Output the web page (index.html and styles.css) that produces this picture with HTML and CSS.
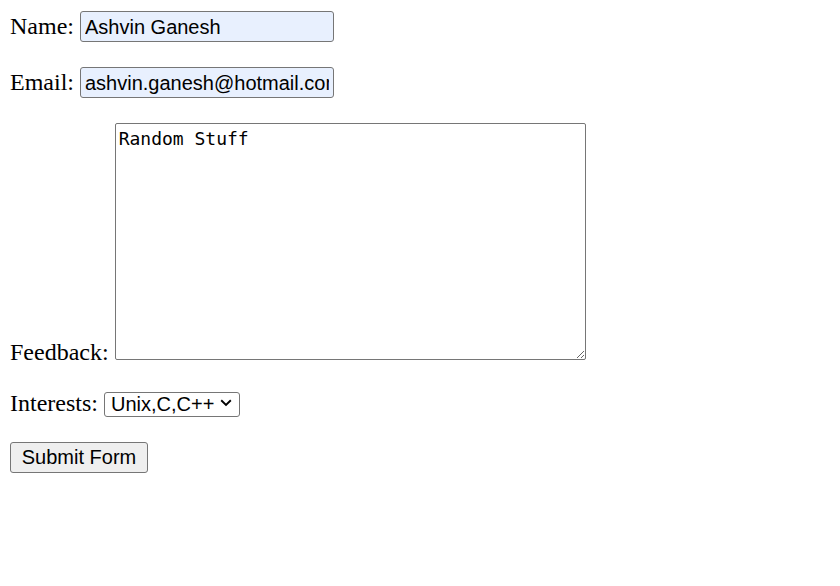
FILE: index.html
```html
<!DOCTYPE html>
<html>
<head>
<meta charset="utf-8">
<link rel="stylesheet" href="styles.css">
</head>
<body>
<form class="form">
  <div class="row">
    <label class="label" for="name">Name:</label>
    <input class="field filled" id="name" type="text" value="Ashvin Ganesh">
  </div>
  <div class="row">
    <label class="label" for="email">Email:</label>
    <input class="field filled" id="email" type="text" value="ashvin.ganesh@hotmail.com">
  </div>
  <div class="row row-bottom">
    <label class="label label-bottom" for="fb">Feedback:</label>
    <textarea class="area" id="fb">Random Stuff</textarea>
  </div>
  <div class="row row-select">
    <label class="label" for="int">Interests:</label>
    <span class="select-wrap">
      <select class="select" id="int"><option>Unix,C,C++</option></select>
      <svg class="chev" width="12" height="8" viewBox="0 0 12 8"><path d="M1.2 1.3 L6 6 L10.8 1.3" fill="none" stroke="#000" stroke-width="1.9"/></svg>
    </span>
  </div>
  <div class="row">
    <button class="btn" type="button">Submit Form</button>
  </div>
</form>
</body>
</html>
```
FILE: styles.css
```css
html, body {
  margin: 0;
  padding: 0;
  background: #fff;
}
.form {
  display: flex;
  flex-direction: column;
  align-items: flex-start;
  gap: 25px;
  padding: 11px 10px;
  font-family: "Liberation Serif", "Times New Roman", serif;
  font-size: 24px;
  color: #000;
}
.row {
  display: flex;
  align-items: baseline;
  gap: 6px;
}
.row-bottom {
  align-items: flex-end;
}
.label-bottom {
  margin-bottom: -6px;
}
.row-select {
  margin-top: 5px;
}
.label {
  white-space: nowrap;
}
.field {
  box-sizing: border-box;
  width: 254px;
  height: 31px;
  margin: 0;
  padding: 1px 4px 0;
  border: 1px solid #767676;
  border-radius: 3px;
  font-family: "Liberation Sans", Arial, sans-serif;
  font-size: 20px;
  color: #000;
  outline: none;
}
.filled {
  background: #e8f0fe;
}
.area {
  box-sizing: border-box;
  width: 471px;
  height: 237px;
  margin: 0;
  padding: 4px 3px;
  border: 1px solid #767676;
  border-radius: 2px;
  font-family: "DejaVu Sans Mono", "Liberation Mono", monospace;
  font-size: 18px;
  color: #000;
  background: #fff;
  outline: none;
}
.select-wrap {
  position: relative;
  display: inline-block;
}
.select {
  appearance: none;
  -webkit-appearance: none;
  box-sizing: border-box;
  width: 136px;
  height: 25px;
  margin: 0;
  padding: 0 20px 0 6px;
  border: 1px solid #767676;
  border-radius: 3px;
  background: #fff;
  font-family: "Liberation Sans", Arial, sans-serif;
  font-size: 20px;
  color: #000;
}
.chev {
  position: absolute;
  left: 116px;
  top: 9px;
  pointer-events: none;
}
.btn {
  box-sizing: border-box;
  width: 138px;
  height: 31px;
  margin: 0;
  padding: 0 10px;
  border: 1px solid #767676;
  border-radius: 3px;
  background: #efefef;
  font-family: "Liberation Sans", Arial, sans-serif;
  font-size: 20px;
  color: #000;
}
```
